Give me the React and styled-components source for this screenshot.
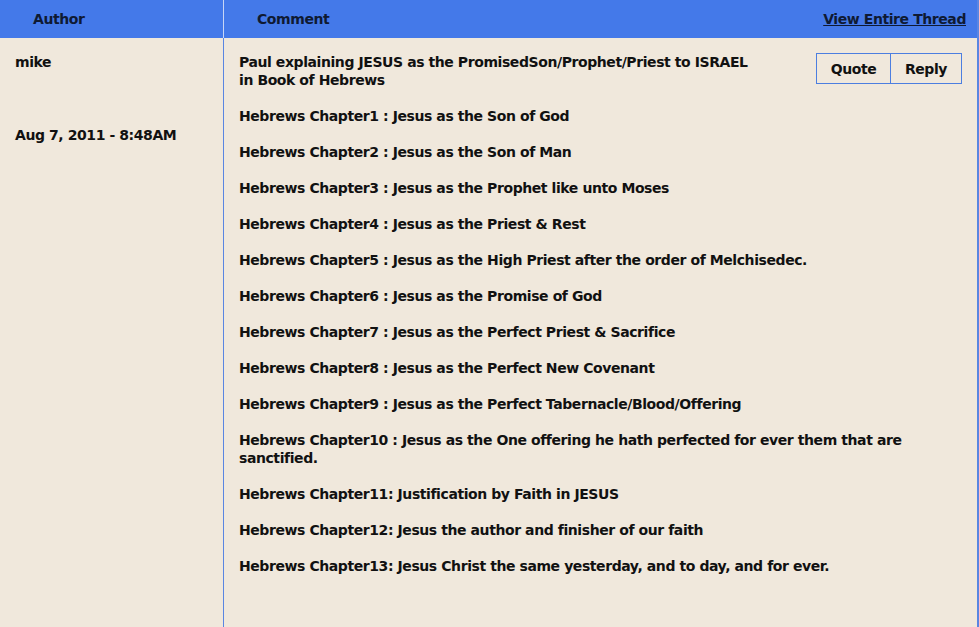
import React from "react";
import styled, { createGlobalStyle } from "styled-components";

const Global = createGlobalStyle`
  html, body { margin: 0; padding: 0; background: #f0e8dc; }
  body { font-family: Tahoma, "DejaVu Sans", Verdana, sans-serif; }
`;

const Table = styled.div`
  width: 979px;
  height: 627px;
  display: grid;
  grid-template-columns: 223px 1fr;
  grid-template-rows: 38px 1fr;
  background: #f0e8dc;
  color: #111;
  font-weight: bold;
  font-size: 14px;
  letter-spacing: -0.42px;
  border-right: 2px solid #5a86e2;
  box-sizing: border-box;
`;

const HeadCell = styled.div`
  background: #4479e9;
  display: flex;
  align-items: center;
  justify-content: space-between;
  padding: 0 11px 0 ${p => p.$pad}px;
  color: #0f1a33;
  font-size: 14px;
  border-left: ${p => (p.$divider ? "1px solid #c8d6f5" : "none")};
`;

const ThreadLink = styled.a`
  color: #0f1a33;
  text-decoration: underline;
  cursor: pointer;
`;

const AuthorCell = styled.div`
  padding: 15px 15px;
  line-height: 18px;
  display: flex;
  flex-direction: column;
  gap: 55px;
`;

const CommentCell = styled.div`
  border-left: 1px solid #5a86e2;
  padding: 15px 16px 0 15px;
  line-height: 18px;
  position: relative;
`;

const Para = styled.p`
  margin: 0 0 18px 0;
  max-width: ${p => (p.$narrow ? "560px" : "680px")};
`;

const Buttons = styled.div`
  position: absolute;
  top: 15px;
  right: 15px;
  display: flex;
`;

const Btn = styled.button`
  font: inherit;
  font-weight: bold;
  letter-spacing: inherit;
  color: #111;
  background: transparent;
  border: 1px solid #4c7ee0;
  margin-left: ${p => (p.$joined ? "-1px" : "0")};
  height: 31px;
  width: ${p => p.$w}px;
  padding: 0;
  cursor: pointer;
`;

const lines = [
  "Hebrews Chapter1 : Jesus as the Son of God",
  "Hebrews Chapter2 : Jesus as the Son of Man",
  "Hebrews Chapter3 : Jesus as the Prophet like unto Moses",
  "Hebrews Chapter4 : Jesus as the Priest & Rest",
  "Hebrews Chapter5 : Jesus as the High Priest after the order of Melchisedec.",
  "Hebrews Chapter6 : Jesus as the Promise of God",
  "Hebrews Chapter7 : Jesus as the Perfect Priest & Sacrifice",
  "Hebrews Chapter8 : Jesus as the Perfect New Covenant",
  "Hebrews Chapter9 : Jesus as the Perfect Tabernacle/Blood/Offering",
  "Hebrews Chapter10 : Jesus as the One offering he hath perfected for ever them that are sanctified.",
  "Hebrews Chapter11: Justification by Faith in JESUS",
  "Hebrews Chapter12: Jesus the author and finisher of our faith",
  "Hebrews Chapter13: Jesus Christ the same yesterday, and to day, and for ever.",
];

export default function App() {
  return (
    <>
      <Global />
      <Table>
        <HeadCell $pad={33}>Author</HeadCell>
        <HeadCell $pad={33} $divider>
          <span>Comment</span>
          <ThreadLink>View Entire Thread</ThreadLink>
        </HeadCell>
        <AuthorCell>
          <div>mike</div>
          <div>Aug 7, 2011 - 8:48AM</div>
        </AuthorCell>
        <CommentCell>
          <Buttons>
            <Btn $w={75}>Quote</Btn>
            <Btn $w={72} $joined>Reply</Btn>
          </Buttons>
          <Para $narrow>
            Paul explaining JESUS as the PromisedSon/Prophet/Priest to ISRAEL
            <br />
            in Book of Hebrews
          </Para>
          {lines.map((l, i) => (
            <Para key={i}>{l}</Para>
          ))}
        </CommentCell>
      </Table>
    </>
  );
}
